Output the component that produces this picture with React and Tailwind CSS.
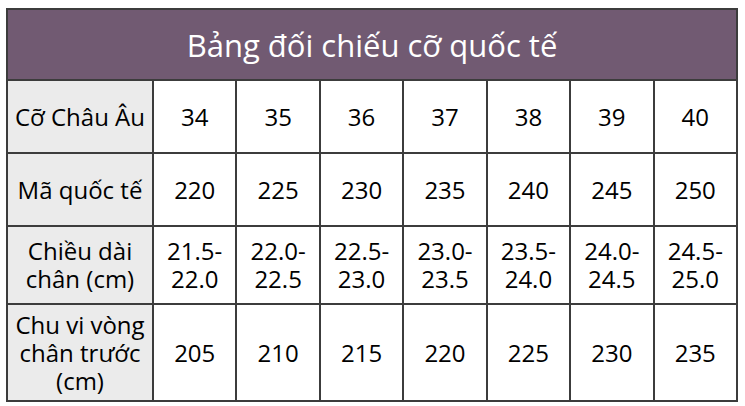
import React from "react";

const sizes = ["34", "35", "36", "37", "38", "39", "40"];
const codes = ["220", "225", "230", "235", "240", "245", "250"];
const lengths = [
    ["21.5-", "22.0"],
    ["22.0-", "22.5"],
    ["22.5-", "23.0"],
    ["23.0-", "23.5"],
    ["23.5-", "24.0"],
    ["24.0-", "24.5"],
    ["24.5-", "25.0"],
];
const girths = ["205", "210", "215", "220", "225", "230", "235"];

const cell = "border-2 border-[#3c3c3c] text-center align-middle px-1";
const head = "border-2 border-[#3c3c3c] bg-[#ebebeb] text-center align-middle px-1";

const App = () => {
    return (
        <div className="w-[745px] h-[406px] bg-white pt-[8px] pl-[6px] font-['Open_Sans',sans-serif] font-medium text-black text-[24px] leading-[28px]">
            <table className="table-fixed border-collapse w-[732px]">
                <colgroup>
                    <col className="w-[146px]" />
                    {sizes.map((s) => (
                        <col key={s} />
                    ))}
                </colgroup>
                <tbody>
                    <tr className="h-[71px]">
                        <td
                            colSpan={8}
                            className="border-2 border-[#3c3c3c] bg-[#715a72] text-white text-center text-[31px] leading-[38px] font-normal"
                        >
                            Bảng đối chiếu cỡ quốc tế
                        </td>
                    </tr>
                    <tr className="h-[73px]">
                        <td className={head}>Cỡ Châu Âu</td>
                        {sizes.map((s) => (
                            <td key={s} className={cell}>
                                {s}
                            </td>
                        ))}
                    </tr>
                    <tr className="h-[73px]">
                        <td className={head}>Mã quốc tế</td>
                        {codes.map((c) => (
                            <td key={c} className={cell}>
                                {c}
                            </td>
                        ))}
                    </tr>
                    <tr className="h-[78px]">
                        <td className={head}>
                            Chiều dài
                            <br />
                            chân (cm)
                        </td>
                        {lengths.map((l) => (
                            <td key={l[0]} className={cell}>
                                {l[0]}
                                <br />
                                {l[1]}
                            </td>
                        ))}
                    </tr>
                    <tr className="h-[97px]">
                        <td className={head}>
                            Chu vi vòng
                            <br />
                            chân trước
                            <br />
                            (cm)
                        </td>
                        {girths.map((g) => (
                            <td key={g} className={cell}>
                                {g}
                            </td>
                        ))}
                    </tr>
                </tbody>
            </table>
        </div>
    );
};

export default App;
